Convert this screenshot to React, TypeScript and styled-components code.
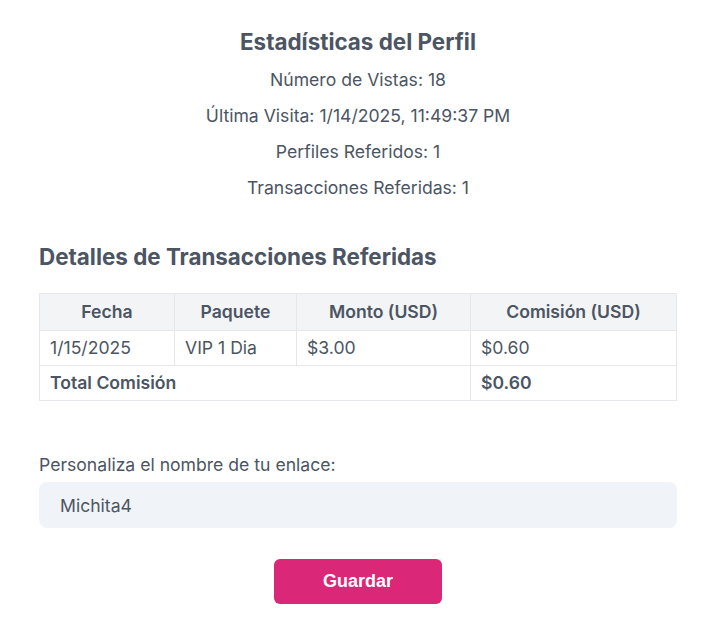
import * as React from 'react';
import styled, { createGlobalStyle } from 'styled-components';

const GlobalStyle = createGlobalStyle`
  * { box-sizing: border-box; }
  body {
    margin: 0;
    background: #ffffff;
    font-family: Inter, "Noto Sans", sans-serif;
    color: #4b5563;
  }
`;

type Row = { fecha: string; paquete: string; monto: string; comision: string };

const rows: Row[] = [{ fecha: '1/15/2025', paquete: 'VIP 1 Dia', monto: '$3.00', comision: '$0.60' }];

const stats = [
  'Número de Vistas: 18',
  'Última Visita: 1/14/2025, 11:49:37 PM',
  'Perfiles Referidos: 1',
  'Transacciones Referidas: 1',
];

export default function App() {
  const [name, setName] = React.useState('Michita4');
  return (
    <>
      <GlobalStyle />
      <Page>
        <StatsBlock>
          <Title>Estadísticas del Perfil</Title>
          {stats.map((s) => (
            <StatLine key={s}>{s}</StatLine>
          ))}
        </StatsBlock>

        <Section>
          <SectionTitle>Detalles de Transacciones Referidas</SectionTitle>
          <Table>
            <colgroup>
              <col style={{ width: 135 }} />
              <col style={{ width: 122 }} />
              <col style={{ width: 174 }} />
              <col />
            </colgroup>
            <thead>
              <tr>
                <Th>Fecha</Th>
                <Th>Paquete</Th>
                <Th>Monto (USD)</Th>
                <Th>Comisión (USD)</Th>
              </tr>
            </thead>
            <tbody>
              {rows.map((r) => (
                <tr key={r.fecha + r.paquete}>
                  <Td>{r.fecha}</Td>
                  <Td>{r.paquete}</Td>
                  <Td>{r.monto}</Td>
                  <Td>{r.comision}</Td>
                </tr>
              ))}
              <tr>
                <Td colSpan={3} bold>
                  Total Comisión
                </Td>
                <Td bold>$0.60</Td>
              </tr>
            </tbody>
          </Table>
        </Section>

        <Field>
          <Label htmlFor="link-name">Personaliza el nombre de tu enlace:</Label>
          <Input id="link-name" value={name} onChange={(e) => setName(e.target.value)} />
        </Field>

        <ButtonBar>
          <SaveButton type="button">Guardar</SaveButton>
        </ButtonBar>
      </Page>
    </>
  );
}

const Page = styled.div`
  width: 638px;
  margin-left: 39px;
  padding-top: 28px;
  display: flex;
  flex-direction: column;
`;

const StatsBlock = styled.div`
  display: flex;
  flex-direction: column;
  align-items: center;
  gap: 12px;
`;

const Title = styled.h2`
  margin: 0;
  font-size: 22.4px;
  line-height: 28px;
  font-weight: 700;
`;

const StatLine = styled.p`
  margin: 0;
  font-size: 17.6px;
  line-height: 24px;
`;

const Section = styled.div`
  margin-top: 43px;
  display: flex;
  flex-direction: column;
  gap: 22px;
`;

const SectionTitle = styled.h3`
  margin: 0;
  font-size: 22.4px;
  line-height: 28px;
  font-weight: 700;
`;

const Table = styled.table`
  width: 100%;
  border-collapse: collapse;
  table-layout: fixed;
  font-size: 17.6px;
`;

const Th = styled.th`
  background: #f3f4f6;
  border: 1px solid #e5e7eb;
  padding: 6px 10px;
  line-height: 24px;
  font-weight: 600;
  text-align: center;
`;

const Td = styled.td<{ bold?: boolean }>`
  border: 1px solid #e5e7eb;
  padding: 5px 10px;
  line-height: 24px;
  font-weight: ${({ bold }) => (bold ? 600 : 400)};
  text-align: left;
`;

const Field = styled.div`
  margin-top: 52px;
  display: flex;
  flex-direction: column;
  gap: 5px;
`;

const Label = styled.label`
  font-size: 17.6px;
  line-height: 24px;
`;

const Input = styled.input`
  height: 46px;
  width: 100%;
  border: none;
  outline: none;
  border-radius: 8px;
  background: #f0f4f8;
  padding: 0 21px;
  font-family: Inter, "Noto Sans", sans-serif;
  font-size: 17.6px;
  color: #4b5563;
`;

const ButtonBar = styled.div`
  margin-top: 31px;
  display: flex;
  justify-content: center;
`;

const SaveButton = styled.button`
  width: 168px;
  height: 45px;
  border: none;
  border-radius: 6px;
  background: #db2777;
  color: #ffffff;
  font-family: "Liberation Sans", Arial, sans-serif;
  font-weight: 700;
  font-size: 18px;
  cursor: pointer;
`;
